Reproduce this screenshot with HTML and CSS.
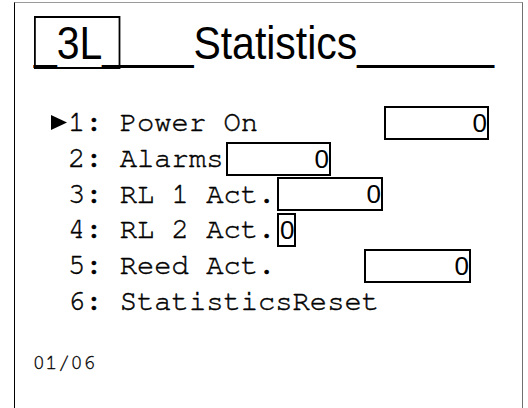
FILE: index.html
```html
<!DOCTYPE html>
<html>
<head>
<meta charset="utf-8">
<link rel="stylesheet" href="styles.css">
</head>
<body>
<div class="screen">
  <div class="title"><span class="tag">_3L_</span>___Statistics______</div>
  <div class="rows">
    <div class="row"><span class="cursor"><svg width="16" height="15" viewBox="0 0 16 15"><polygon points="0,0 16,7.5 0,15" fill="#000"/></svg></span><span class="label">1: Power On</span><span class="val v1">0</span></div>
    <div class="row"><span class="cursor"></span><span class="label">2: Alarms</span><span class="val v2">0</span></div>
    <div class="row"><span class="cursor"></span><span class="label">3: RL 1 Act.</span><span class="val v3">0</span></div>
    <div class="row"><span class="cursor"></span><span class="label">4: RL 2 Act.</span><span class="val v4">0</span></div>
    <div class="row"><span class="cursor"></span><span class="label">5: Reed Act.</span><span class="val v5">0</span></div>
    <div class="row"><span class="cursor"></span><span class="label">6: StatisticsReset</span></div>
  </div>
  <div class="footer">01/06</div>
</div>
</body>
</html>
```
FILE: styles.css
```css
html, body {
  margin: 0;
  padding: 0;
  background: #fff;
}
.screen {
  margin: 2px 0 0 14px;
  width: 509px;
  height: 406px;
  box-sizing: border-box;
  border-top: 1px solid #9a9a9a;
  border-left: 1px solid #000;
  border-right: 1px solid #707070;
  color: #000;
  overflow: hidden;
}
.title {
  margin: 14px 0 0 19px;
  height: 53px;
  font-family: "Liberation Sans", Arial, sans-serif;
  font-size: 45.5px;
  line-height: 53px;
  white-space: pre;
  transform: scaleX(0.9);
  transform-origin: 0 0;
}
.tag {
  position: relative;
}
.tag::after {
  content: "";
  position: absolute;
  left: 0;
  top: -2.3px;
  width: 96.4px;
  height: 53.3px;
  box-sizing: border-box;
  border: 2px solid #000;
}
.rows {
  margin-top: 35px;
  padding-left: 35.7px;
}
.row {
  display: flex;
  align-items: center;
  height: 35.75px;
  font-family: "Nimbus Mono PS", "Nimbus Mono L", "FreeMono", "Courier 10 Pitch", "Courier", "Liberation Mono", monospace;
  font-size: 28.8px;
  line-height: 35.75px;
  white-space: pre;
}
.label {
  -webkit-text-stroke: 0.45px #000;
}
.cursor {
  display: inline-block;
  width: 17.28px;
  flex: none;
  align-self: stretch;
  position: relative;
}
.cursor svg {
  position: absolute;
  left: 0;
  top: 9.6px;
}
.val {
  box-sizing: border-box;
  height: 34px;
  border: 2px solid #000;
  font-family: "Liberation Sans", Arial, sans-serif;
  font-size: 26px;
  line-height: 30px;
  text-align: right;
  padding: 0 0 0 1px;
}
.v1 { margin-left: 126px; width: 105px; }
.v2 { margin-left: 2.5px; width: 105px; }
.v3 { margin-left: 1.7px; width: 106px; }
.v4 { margin-left: 1.7px; }
.v5 { margin-left: 88.7px; width: 107px; }
.footer {
  margin-top: 32.6px;
  padding-left: 17.5px;
  font-family: "Nimbus Mono PS", "Nimbus Mono L", "FreeMono", "Courier 10 Pitch", "Courier", "Liberation Mono", monospace;
  font-size: 21px;
  -webkit-text-stroke: 0.3px #000;
}
```
